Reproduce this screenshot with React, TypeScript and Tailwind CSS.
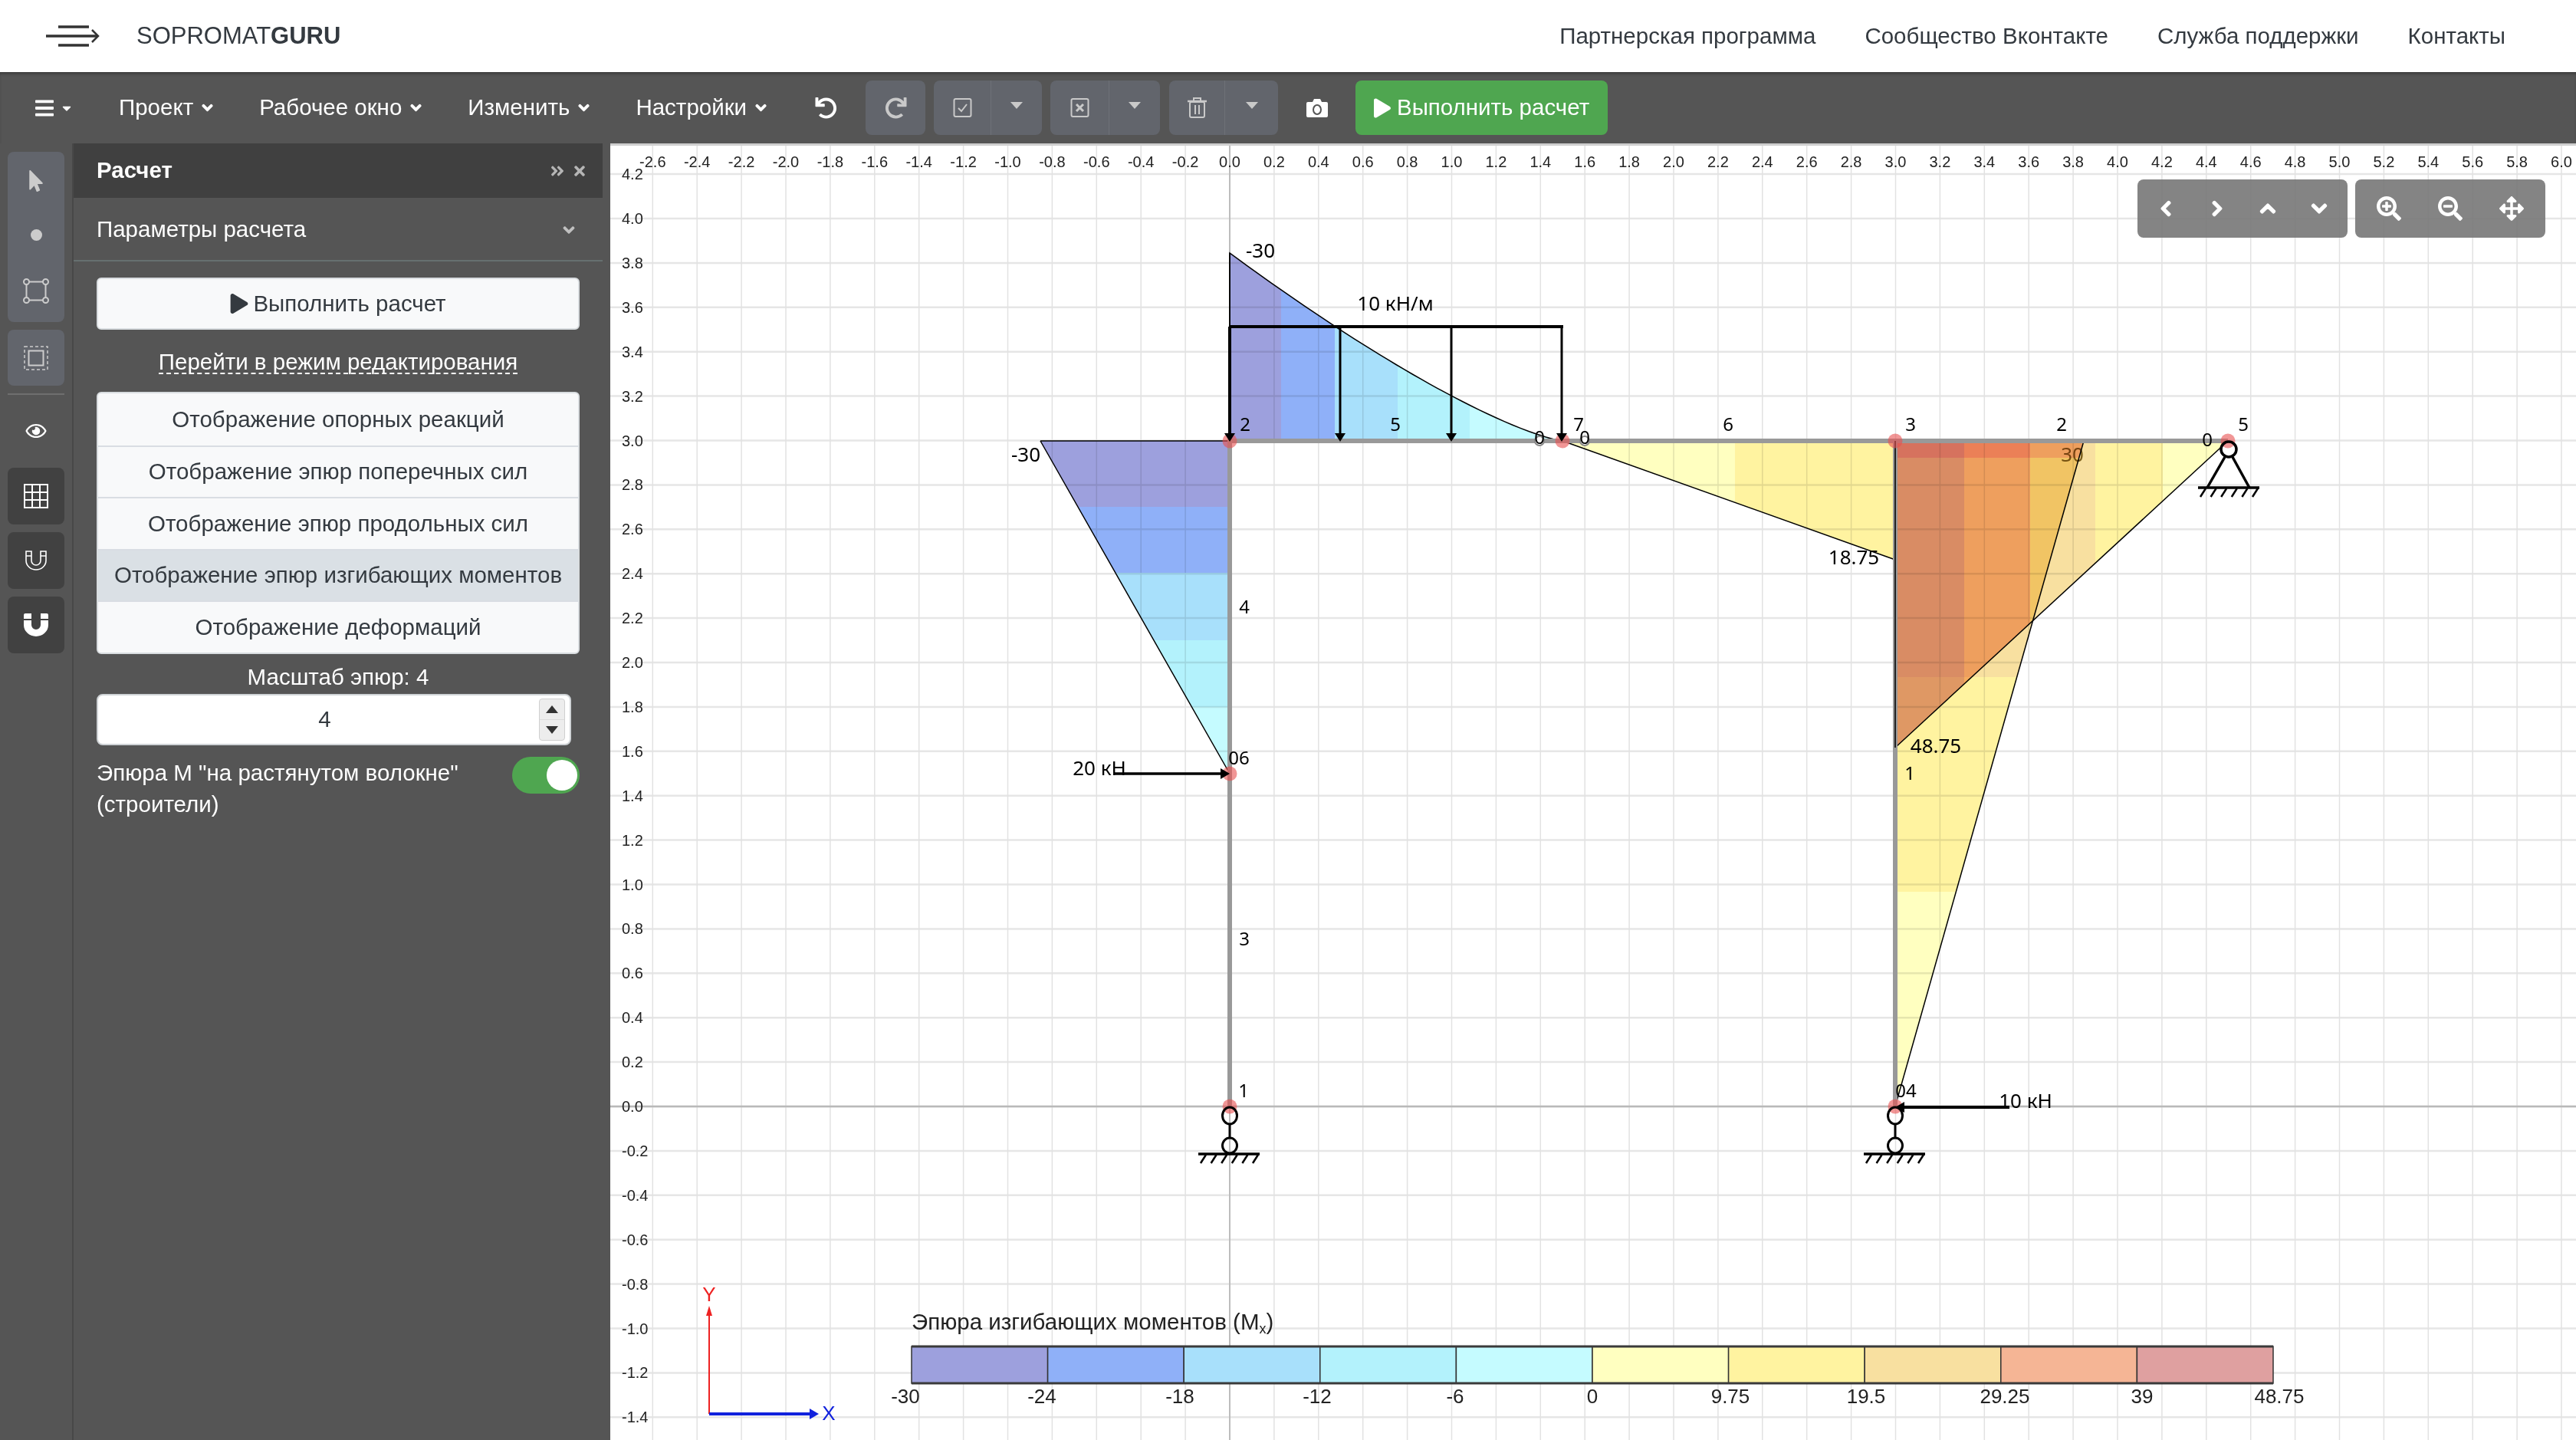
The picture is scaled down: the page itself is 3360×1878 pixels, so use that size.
import {
  FaAngleDoubleRight,
  FaAngleDown,
  FaArrowsAlt,
  FaBars,
  FaCaretDown,
  FaChevronDown,
  FaChevronLeft,
  FaChevronRight,
  FaChevronUp,
  FaMousePointer,
  FaPlay,
  FaRedo,
  FaRegEye,
  FaSearchMinus,
  FaSearchPlus,
  FaTimes,
  FaUndo,
} from "react-icons/fa";

const X = (u: number) => 1604 + 289.5 * u;
const Y = (v: number) => 1442 - 289.5 * v;

const legend = ["#9da0dd", "#8fb0f8", "#a8e0fb", "#b3f2fc", "#c5fbff", "#ffffc0", "#fff3a0", "#f8e0a0", "#f5b595", "#dfa0a0"];
const legendLabels: [string, number][] = [
  ["-30", 1181], ["-24", 1359], ["-18", 1539], ["-12", 1718], ["-6", 1898], ["0", 2077],
  ["9.75", 2257], ["19.5", 2434], ["29.25", 2615], ["39", 2794], ["48.75", 2973],
];

const xTicks = Array.from({ length: 44 }, (_, i) => -2.6 + i * 0.2);
const yTicks = Array.from({ length: 29 }, (_, i) => 4.2 - i * 0.2);

// парабола над ригелем
const curve = Array.from({ length: 41 }, (_, i) => {
  const s = (434 * i) / 40;
  return `${1604 + s},${574 - 245 * Math.pow(1 - s / 434, 1.3)}`;
}).join(" ");

function Bands({ id, points, bands, dir }: { id: string; points: string; bands: [number, number, string][]; dir: "x" | "y" }) {
  return (
    <>
      <clipPath id={id}>
        <polygon points={points} />
      </clipPath>
      <g clipPath={`url(#${id})`} className="mix-blend-multiply">
        {bands.map(([a, b, c]) =>
          dir === "x" ? (
            <rect key={a} x={a} y={189} width={b - a} height={1400} fill={c} />
          ) : (
            <rect key={a} x={796} y={a} width={2500} height={b - a} fill={c} />
          ),
        )}
      </g>
    </>
  );
}

function Ground({ x1, x2, y }: { x1: number; x2: number; y: number }) {
  const step = (x2 - x1 - 12) / 5;
  return (
    <g stroke="#000" strokeWidth={2.5} fill="none">
      <line x1={x1} y1={y} x2={x2} y2={y} strokeWidth={3.5} />
      {[0, 1, 2, 3, 4, 5].map((i) => (
        <line key={i} x1={x1 + 10 + i * step} y1={y + 1} x2={x1 + 3 + i * step} y2={y + 12} />
      ))}
    </g>
  );
}

function RollerSupport({ x }: { x: number }) {
  return (
    <g>
      <ellipse cx={x} cy={1454} rx={9.5} ry={11} fill="none" stroke="#000" strokeWidth={3} />
      <line x1={x} y1={1465} x2={x} y2={1483} stroke="#000" strokeWidth={3} />
      <ellipse cx={x} cy={1493} rx={9.5} ry={10} fill="none" stroke="#000" strokeWidth={3} />
      <Ground x1={x - 41} x2={x + 39} y={1504} />
    </g>
  );
}

function DownArrow({ x, w = 3 }: { x: number; w?: number }) {
  return (
    <g>
      <line x1={x} y1={425} x2={x} y2={566} stroke="#000" strokeWidth={w} />
      <polygon points={`${x - 7},564 ${x + 7},564 ${x},575`} fill="#000" />
    </g>
  );
}

function Diagram() {
  const label = "font-['Noto_Sans'] fill-black";
  return (
    <svg viewBox="796 189 2564 1688" className="h-full w-full font-['Liberation_Sans']">
      {/* сетка */}
      {yTicks.map((t) => (
        <line key={t} x1={796} x2={3360} y1={Y(t)} y2={Y(t)} stroke="#e6e6e6" strokeWidth={2.5} />
      ))}
      {xTicks.map((t) => (
        <line key={t} x1={X(t)} x2={X(t)} y1={189} y2={1878} stroke="#e2e2e2" strokeWidth={1.5} />
      ))}
      <line x1={796} x2={3360} y1={1442} y2={1442} stroke="#b9b9b9" strokeWidth={2.5} />
      <line x1={1604} x2={1604} y1={189} y2={1878} stroke="#bdbdbd" strokeWidth={2} />

      {xTicks.map((t) => (
        <text key={t} x={X(t)} y={217} textAnchor="middle" fontSize={20} fill="#222">
          {t.toFixed(1)}
        </text>
      ))}
      {yTicks.map((t) => (
        <text key={t} x={811} y={Y(t) + 7} fontSize={20} fill="#222">
          {Math.abs(t) < 0.01 ? "0.0" : t.toFixed(1)}
        </text>
      ))}

      {/* эпюры */}
      <text x={2703} y={601} textAnchor="middle" fontSize={26} fill="#7d6a2a" className="font-['Noto_Sans']">
        30
      </text>
      <Bands
        id="left"
        dir="y"
        points="1357,574 1604,574 1604,1008"
        bands={[[574, 660, legend[0]], [660, 746, legend[1]], [746, 834, legend[2]], [834, 921, legend[3]], [921, 1008, legend[4]]]}
      />
      <Bands
        id="top"
        dir="x"
        points={`1604,574 ${curve}`}
        bands={[[1604, 1671, legend[0]], [1671, 1741, legend[1]], [1741, 1823, legend[2]], [1823, 1917, legend[3]], [1917, 2040, legend[4]]]}
      />
      <Bands
        id="mid"
        dir="x"
        points="2038,574 2472,574 2472,729"
        bands={[[2038, 2263, legend[5]], [2263, 2472, legend[6]]]}
      />
      <Bands
        id="rightA"
        dir="x"
        points="2472,574 2906,574 2472,974"
        bands={[[2472, 2562, legend[9]], [2562, 2648, legend[8]], [2648, 2733, legend[7]], [2733, 2821, legend[6]], [2821, 2906, legend[5]]]}
      />
      <Bands
        id="rightB"
        dir="y"
        points="2472,574 2718,574 2472,1442"
        bands={[[574, 596, legend[8]], [596, 882, legend[7]], [882, 1162, legend[6]], [1162, 1442, legend[5]]]}
      />
      <g fill="none" stroke="#000" strokeWidth={1.5}>
        <polyline points="1357,574 1604,574 1604,1008 1357,574" />
        <polyline points={`1604,574 ${curve}`} />
        <polyline points="2038,574 2472,729" />
        <polyline points="2906,574 2472,974" />
        <polyline points="2718,574 2472,1442" />
      </g>

      {/* стержни */}
      <g stroke="#999" strokeWidth={6} fill="none">
        <line x1={1604} y1={572} x2={1604} y2={1442} />
        <line x1={1604} y1={574} x2={2906} y2={574} />
        <line x1={2472} y1={574} x2={2472} y2={1442} />
      </g>
      <line x1={1604} y1={329} x2={1604} y2={574} stroke="#000" strokeWidth={1.5} />
      <line x1={2472} y1={574} x2={2472} y2={974} stroke="#222" strokeWidth={2} />

      {/* узлы */}
      {[[1604, 574], [2038, 574], [2472, 574], [2906, 574], [1604, 1442], [2472, 1442], [1604, 1008]].map(([cx, cy]) => (
        <circle key={`${cx}-${cy}`} cx={cx} cy={cy} r={9.5} fill="#e85050" fillOpacity={0.6} />
      ))}
      <circle cx={2008} cy={574} r={6} fill="#fff" stroke="#888" strokeWidth={2} />
      <circle cx={2067} cy={574} r={6} fill="#fff" stroke="#888" strokeWidth={2} />

      {/* нагрузка */}
      <line x1={1603} y1={425} x2={2039} y2={425} stroke="#000" strokeWidth={4} />
      <DownArrow x={1604} w={4} />
      <DownArrow x={1748} />
      <DownArrow x={1893} />
      <DownArrow x={2037} />
      <line x1={1453} y1={1008} x2={1595} y2={1008} stroke="#000" strokeWidth={3.5} />
      <polygon points="1592,1001 1592,1015 1604,1008" fill="#000" />
      <line x1={2480} y1={1443} x2={2621} y2={1443} stroke="#000" strokeWidth={4} />
      <polygon points="2484,1436 2484,1450 2472,1443" fill="#000" />

      {/* опоры */}
      <RollerSupport x={1604} />
      <RollerSupport x={2472} />
      <g fill="none" stroke="#000" strokeWidth={3.5}>
        <circle cx={2907} cy={585} r={10} />
        <line x1={2902} y1={595} x2={2879} y2={635} />
        <line x1={2912} y1={595} x2={2934} y2={635} />
      </g>
      <Ground x1={2867} x2={2947} y={635} />

      {/* подписи */}
      <g className={label} fontSize={26} textAnchor="middle">
        <text x={1644} y={335}>-30</text>
        <text x={1820} y={404}>10 кН/м</text>
        <text x={1338} y={601}>-30</text>
        <text x={2418} y={735}>18.75</text>
        <text x={2525} y={981}>48.75</text>
        <text x={1434} y={1010}>20 кН</text>
        <text x={2642} y={1444}>10 кН</text>
      </g>
      <g className={label} fontSize={24} textAnchor="middle">
        {[
          ["2", 1624, 561], ["5", 1820, 561], ["7", 2059, 561], ["6", 2254, 561], ["3", 2492, 561],
          ["2", 2689, 561], ["5", 2926, 561], ["0", 2879, 581], ["0", 2008, 578], ["0", 2067, 578],
          ["4", 1623, 799], ["3", 1623, 1232], ["1", 1622, 1430], ["06", 1616, 996], ["1", 2491, 1016], ["04", 2486, 1430],
        ].map(([t, x, y]) => (
          <text key={`${t}-${x}`} x={x} y={y}>{t}</text>
        ))}
      </g>

      {/* оси */}
      <line x1={925} y1={1712} x2={925} y2={1843} stroke="#ee2222" strokeWidth={2} />
      <polygon points="921,1715 929,1715 925,1702" fill="#ee2222" />
      <line x1={925} y1={1843} x2={1058} y2={1843} stroke="#1122dd" strokeWidth={4} />
      <polygon points="1056,1836 1056,1850 1068,1843" fill="#1122dd" />
      <text x={925} y={1696} textAnchor="middle" fontSize={26} fill="#ee2222">Y</text>
      <text x={1081} y={1851} textAnchor="middle" fontSize={26} fill="#1122dd">X</text>

      {/* легенда */}
      <text x={1189} y={1733} fontSize={29.5} fill="#222">
        Эпюра изгибающих моментов (M<tspan fontSize={18} dy={5}>x</tspan><tspan dy={-5}>)</tspan>
      </text>
      {legend.map((c, i) => (
        <rect key={c} x={1189 + i * 177.6} y={1755} width={177.6} height={48} fill={c} stroke="#333" strokeWidth={1.5} />
      ))}
      <line x1={1189} x2={2965} y1={1755} y2={1755} stroke="#3a3a3a" strokeWidth={3} />
      <line x1={1189} x2={2965} y1={1803} y2={1803} stroke="#3a3a3a" strokeWidth={3} />
      {legendLabels.map(([t, x]) => (
        <text key={t} x={x} y={1829} textAnchor="middle" fontSize={26} fill="#222">{t}</text>
      ))}
    </svg>
  );
}

function MenuItem({ text }: { text: string }) {
  return (
    <button className="flex items-center gap-[10px] text-[29.5px] text-white">
      {text}
      <FaChevronDown className="h-[15px] w-[17px]" stroke="currentColor" strokeWidth={50} />
    </button>
  );
}

function CheckIcon({ cross }: { cross?: boolean }) {
  return (
    <svg viewBox="0 0 25 25" className="h-[25px] w-[25px]" fill="none" stroke="#c9c9c9" strokeWidth={2}>
      <rect x={1.5} y={1} width={22} height={23} rx={2} />
      {cross ? <path d="M8 8l9 9M17 8l-9 9" strokeWidth={3} /> : <path d="M7 13l4 4 7-9" />}
    </svg>
  );
}

function TrashIcon() {
  return (
    <svg viewBox="0 0 25 27" className="h-[27px] w-[25px]" fill="none" stroke="#c9c9c9" strokeWidth={2}>
      <path d="M0 5h25" strokeWidth={2.5} />
      <path d="M8 4V1h9v3" />
      <rect x={3} y={6} width={19} height={20} rx={2} />
      <path d="M10 10v12M15 10v12" />
    </svg>
  );
}

function Caret() {
  return <div className="h-0 w-0 border-x-[8px] border-t-[9px] border-x-transparent border-t-[#c9c9c9]" />;
}

function SplitButton({ icon, w, left }: { icon: React.ReactNode; w: string; left: string }) {
  return (
    <div className={`flex h-[71px] overflow-hidden rounded-[8px] bg-[#62656c] ${w}`}>
      <div className={`flex items-center justify-center border-r border-[#6e7177] ${left}`}>{icon}</div>
      <div className="flex flex-1 items-center justify-center pb-[6px]">
        <Caret />
      </div>
    </div>
  );
}

function Toolbar() {
  return (
    <div className="flex h-[93px] items-center bg-[#555555] pl-[46px] shadow-[inset_0_4px_4px_-2px_rgba(0,0,0,0.35)]">
      <div className="flex items-center gap-[9px] text-white">
        <FaBars className="h-[28px] w-[24px]" />
        <FaCaretDown className="h-[18px] w-[16px]" />
      </div>
      <div className="ml-[60px] flex gap-[59px]">
        <MenuItem text="Проект" />
        <MenuItem text="Рабочее окно" />
        <MenuItem text="Изменить" />
        <MenuItem text="Настройки" />
      </div>
      <FaUndo className="ml-[62px] h-[28px] w-[29px] text-white" />
      <div className="ml-[37px] flex h-[71px] w-[78px] items-center justify-center rounded-[8px] bg-[#62656c]">
        <FaRedo className="h-[28px] w-[29px] text-[#c9c9c9]" />
      </div>
      <div className="ml-[11px]">
        <SplitButton icon={<CheckIcon />} w="w-[141px]" left="w-[75px]" />
      </div>
      <div className="ml-[11px]">
        <SplitButton icon={<CheckIcon cross />} w="w-[143px]" left="w-[77px]" />
      </div>
      <div className="ml-[12px]">
        <SplitButton icon={<TrashIcon />} w="w-[142px]" left="w-[73px]" />
      </div>
      <svg viewBox="0 0 28 24" className="ml-[37px] h-[24px] w-[28px]">
        <path d="M2 4h6l2-4h8l2 4h6a2 2 0 0 1 2 2v16a2 2 0 0 1-2 2H2a2 2 0 0 1-2-2V6a2 2 0 0 1 2-2z" fill="#fff" />
        <ellipse cx={14} cy={14} rx={5} ry={6} fill="none" stroke="#555" strokeWidth={2} />
      </svg>
      <button className="ml-[36px] flex h-[71px] w-[329px] items-center justify-center gap-[8px] rounded-[8px] bg-[#4fa650] text-[29.5px] text-white">
        <FaPlay className="h-[26px] w-[22px]" />
        Выполнить расчет
      </button>
    </div>
  );
}

function ToolColumn() {
  return (
    <div className="flex w-[96px] shrink-0 flex-col border-r-2 border-[#484848] bg-[#555555] px-[10px] pt-[11px]">
      <div className="flex h-[222px] flex-col items-center justify-between rounded-[8px] bg-[#62656c] pb-[24px] pt-[24px] text-[#cccccc]">
        <FaMousePointer className="h-[28px] w-[20px]" />
        <div className="h-[15px] w-[15px] rounded-full bg-[#cccccc]" />
        <svg viewBox="0 0 34 33" className="h-[33px] w-[34px]" fill="none" stroke="#cccccc" strokeWidth={2}>
          <rect x={4.5} y={4.5} width={25} height={24} />
          <circle cx={4.5} cy={4.5} r={3.5} fill="#62656c" />
          <circle cx={29.5} cy={4.5} r={3.5} fill="#62656c" />
          <circle cx={4.5} cy={28.5} r={3.5} fill="#62656c" />
          <circle cx={29.5} cy={28.5} r={3.5} fill="#62656c" />
        </svg>
      </div>
      <div className="mt-[10px] flex h-[73px] items-center justify-center rounded-[8px] bg-[#62656c]">
        <svg viewBox="0 0 32 32" className="h-[32px] w-[32px]" fill="none" stroke="#cccccc" strokeWidth={1.5}>
          <rect x={1} y={1} width={30} height={30} strokeDasharray="4 3" />
          <rect x={6.5} y={6.5} width={19} height={19} strokeWidth={2} />
        </svg>
      </div>
      <div className="mt-[10px] h-[2px] bg-[#6f6f6f]" />
      <div className="mt-[35px] flex justify-center text-white">
        <FaRegEye className="h-[24px] w-[36px]" />
      </div>
      <div className="mt-[36px] flex h-[74px] items-center justify-center rounded-[8px] bg-[#414141]">
        <svg viewBox="0 0 32 32" className="h-[32px] w-[32px]" fill="none" stroke="#fff" strokeWidth={2}>
          <rect x={1} y={1} width={30} height={30} />
          <path d="M11 1v30M21 1v30M1 11h30M1 21h30" />
        </svg>
      </div>
      <div className="mt-[10px] flex h-[74px] items-center justify-center rounded-[8px] bg-[#414141]">
        <svg viewBox="0 0 28 26" className="h-[26px] w-[28px]" fill="none" stroke="#fff" strokeWidth={1.6}>
          <path d="M1 1h7v12a6 6 0 0 0 12 0V1h7v12a13 12 0 0 1-26 0z" />
          <path d="M1 7h7M20 7h7" />
        </svg>
      </div>
      <div className="mt-[10px] flex h-[74px] items-center justify-center rounded-[8px] bg-[#414141]">
        <svg viewBox="0 0 32 30" className="h-[30px] w-[32px]" fill="#fff">
          <path d="M2 0h8v7H0V2a2 2 0 0 1 2-2zM22 0h8a2 2 0 0 1 2 2v5H22zM0 9h10v6a6 6 0 0 0 12 0V9h10v6a16 15 0 0 1-32 0z" />
        </svg>
      </div>
    </div>
  );
}

function Panel() {
  const rows = [
    "Отображение опорных реакций",
    "Отображение эпюр поперечных сил",
    "Отображение эпюр продольных сил",
    "Отображение эпюр изгибающих моментов",
    "Отображение деформаций",
  ];
  return (
    <div className="w-[700px] shrink-0 bg-[#555555] pr-[10px] text-white">
      <div className="flex h-[71px] items-center justify-between bg-[#404040] pl-[30px] pr-[22px]">
        <span className="text-[29.5px] font-semibold">Расчет</span>
        <div className="flex items-center gap-[12px] text-[#b5b5b5]">
          <FaAngleDoubleRight className="h-[22px] w-[18px]" />
          <FaTimes className="h-[20px] w-[16px]" />
        </div>
      </div>
      <div className="flex h-[83px] items-center justify-between border-b-2 border-[#667070] pl-[30px] pr-[32px] pt-[2px]">
        <span className="text-[29.5px]">Параметры расчета</span>
        <FaAngleDown className="h-[24px] w-[24px] text-[#c0c0c0]" />
      </div>
      <div className="px-[30px]">
        <button className="mt-[21px] flex h-[68px] w-full items-center justify-center gap-[6px] rounded-[6px] border-2 border-[#d9dde0] bg-[#f8f9fa] text-[29.5px] text-[#343a40]">
          <FaPlay className="h-[26px] w-[24px]" />
          Выполнить расчет
        </button>
        <div className="mt-[26px] flex justify-center">
          <span className="h-[32px] border-b-2 border-dashed border-white text-[29.5px] leading-[32px]">
            Перейти в режим редактирования
          </span>
        </div>
        <div className="mt-[23px] overflow-hidden rounded-[6px] border-2 border-[#d9dde0] bg-[#f8f9fa]">
          {rows.map((r, i) => (
            <div
              key={r}
              className={`flex h-[67.6px] items-center justify-center text-[29.5px] text-[#343a40] ${i > 0 ? "border-t-2 border-[#d9dde3]" : ""} ${i === 3 ? "bg-[#dae0e5]" : ""}`}
            >
              {r}
            </div>
          ))}
        </div>
        <div className="mt-[14px] text-center text-[29.5px] leading-[32px]">Масштаб эпюр: 4</div>
        <div className="relative mt-[6px] flex h-[67px] w-[619px] items-center justify-center rounded-[8px] border-2 border-[#cfd3d6] bg-white pr-[24px] text-[29.5px] text-[#343a40]">
          4
          <div className="absolute right-[6px] top-[4px] flex h-[55px] w-[34px] flex-col rounded-[4px] border border-[#d0d0d0] bg-[#ededed] text-[#333]">
            <div className="flex flex-1 items-center justify-center border-b border-[#dcdcdc]">
              <div className="h-0 w-0 border-x-[8px] border-b-[10px] border-x-transparent border-b-[#333]" />
            </div>
            <div className="flex flex-1 items-center justify-center">
              <div className="h-0 w-0 border-x-[8px] border-t-[10px] border-x-transparent border-t-[#333]" />
            </div>
          </div>
        </div>
        <div className="mt-[15px] flex justify-between">
          <div className="text-[29.5px] leading-[41px]">
            Эпюра М "на растянутом волокне"
            <br />
            (строители)
          </div>
          <div className="flex h-[48px] w-[88px] items-center justify-end rounded-full bg-[#4fa650] pr-[3px]">
            <div className="h-[40px] w-[40px] rounded-full bg-white" />
          </div>
        </div>
      </div>
    </div>
  );
}

function ViewControls() {
  const cls = "h-[22px] w-[22px] text-white";
  return (
    <div className="absolute right-[40px] top-[44px] flex gap-[10px]">
      <div className="flex h-[76px] w-[274px] items-center justify-around rounded-[8px] bg-[#777777]/90 px-[4px]">
        <FaChevronLeft className={cls} stroke="currentColor" strokeWidth={40} />
        <FaChevronRight className={cls} stroke="currentColor" strokeWidth={40} />
        <FaChevronUp className={cls} stroke="currentColor" strokeWidth={40} />
        <FaChevronDown className={cls} stroke="currentColor" strokeWidth={40} />
      </div>
      <div className="flex h-[76px] w-[248px] items-center justify-around rounded-[8px] bg-[#777777]/90 px-[4px]">
        <FaSearchPlus className="h-[32px] w-[32px] text-white" />
        <FaSearchMinus className="h-[32px] w-[32px] text-white" />
        <FaArrowsAlt className="h-[32px] w-[32px] text-white" />
      </div>
    </div>
  );
}

export default function App() {
  return (
    <div className="flex h-[1878px] w-[3360px] flex-col overflow-hidden bg-white font-['Liberation_Sans',sans-serif]">
      <div className="flex h-[94px] items-center justify-between bg-white pl-[60px] pr-[92px] text-[#343a40]">
        <div className="flex items-center">
          <svg viewBox="0 0 70 28" className="h-[28px] w-[70px]" fill="none" stroke="#333" strokeWidth={3.5}>
            <path d="M16 2h40M0 14h67M16 26h40" />
            <path d="M60 6l8 8-8 8" strokeWidth={2.5} />
          </svg>
          <span className="ml-[48px] text-[31px]">
            SOPROMAT<b>GURU</b>
          </span>
        </div>
        <nav className="flex gap-[64px] text-[29.5px]">
          <a>Партнерская программа</a>
          <a>Сообщество Вконтакте</a>
          <a>Служба поддержки</a>
          <a>Контакты</a>
        </nav>
      </div>
      <Toolbar />
      <div className="flex min-h-0 flex-1">
        <ToolColumn />
        <Panel />
        <div className="relative min-w-0 flex-1 border-t-[3px] border-[#cfcfcf]">
          <Diagram />
          <ViewControls />
        </div>
      </div>
    </div>
  );
}
